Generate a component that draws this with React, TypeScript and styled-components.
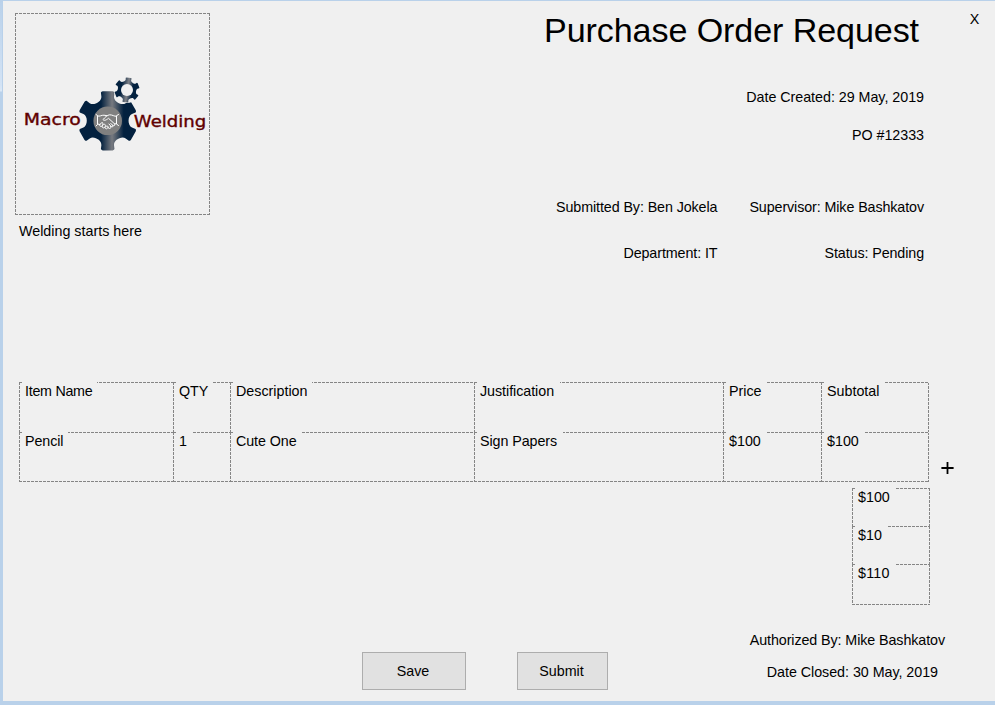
import React from "react";
import styled, { createGlobalStyle, css } from "styled-components";

const FACE = "#f0f0f0";
const DASH = "#858585";
const NAVY = "#03213f";

const GlobalStyle = createGlobalStyle`
  *, *::before, *::after { box-sizing: border-box; }
  html, body { margin: 0; padding: 0; overflow: hidden; }
  body {
    font-family: "Liberation Sans", Arial, sans-serif;
    font-size: 14.3px;
    line-height: 16px;
    color: #000;
    background: ${FACE};
  }
`;

const across = `repeating-linear-gradient(to right, ${DASH} 0 3px, ${FACE} 3px 4px)`;
const down = `repeating-linear-gradient(to bottom, ${DASH} 0 3px, ${FACE} 3px 4px)`;

const Frame = styled.div`
  width: 995px;
  height: 705px;
  padding: 1px 0 4px 3px;
  background:
    linear-gradient(to bottom, #b9d1ea 0, #d3e3f5 85px, #dbe8f6 91px, #b9d1ea 92px) 0 0 / 2px 100% no-repeat,
    #b9d1ea;
`;

const Sheet = styled.main`
  height: 700px;
  background: ${FACE};
  display: flex;
  flex-direction: column;
`;

const Header = styled.header`
  height: 381px;
  display: flex;
  padding: 0 14px 0 12px;
`;

const Brand = styled.div`
  padding-top: 12px;
  width: 195px;
`;

const LogoBox = styled.div`
  width: 195px;
  height: 202px;
  background:
    ${across} 0 0 / 100% 1px no-repeat,
    ${across} 0 100% / 100% 1px no-repeat,
    ${down} 0 0 / 1px 100% no-repeat,
    ${down} 100% 0 / 1px 100% no-repeat;
  svg { display: block; }
`;

const Tagline = styled.div`
  padding: 8px 0 0 4px;
  white-space: nowrap;
`;

const Details = styled.section`
  flex: 1;
  display: flex;
  flex-direction: column;
  align-items: flex-end;
  padding: 9px 0 0;
  white-space: nowrap;
`;

const Title = styled.h1`
  margin: 0 5px 38px 0;
  height: 41px;
  font-size: 34.1px;
  line-height: 41px;
  font-weight: 400;
  letter-spacing: -0.09px;
`;

const MetaLine = styled.div<{ $gap: number }>`
  height: 16px;
  margin-bottom: ${(p) => p.$gap}px;
  letter-spacing: -0.03px;
`;

const People = styled.div`
  display: grid;
  grid-template-columns: auto auto;
  gap: 30px 32px;
  text-align: right;
  letter-spacing: -0.1px;
`;

const CloseButton = styled.button`
  align-self: flex-start;
  margin: 10px 0 0 44px;
  width: 13px;
  padding: 0;
  border: 0;
  background: none;
  font: inherit;
  color: inherit;
`;

const ItemsArea = styled.section`
  display: flex;
  align-items: flex-end;
  padding-left: 16px;
  height: 100px;
`;

const Items = styled.div`
  width: 910px;
  height: 100px;
  display: grid;
  grid-template-columns: 154px 57px 244px 249px 98px 108px;
  grid-template-rows: 50px 50px;
`;

const Cell = styled.div<{ $right?: boolean; $bottom?: boolean }>`
  padding-left: 3px;
  background:
    ${down} 0 0 / 1px 100% no-repeat,
    ${across} 0 0 / 100% 1px no-repeat
    ${(p) => p.$right && css`, ${down} 100% 0 / 1px 100% no-repeat`}
    ${(p) => p.$bottom && css`, ${across} 0 100% / 100% 1px no-repeat`};
`;

const CellLabel = styled.div<{ $width: number; $tracking?: number }>`
  width: ${(p) => p.$width}px;
  height: 18px;
  padding: 1px 0 0 3px;
  background: ${FACE};
  white-space: nowrap;
  letter-spacing: ${(p) => p.$tracking ?? 0}px;
`;

const AddButton = styled.button`
  width: 14px;
  height: 14px;
  margin: 0 0 7px 12px;
  padding: 0;
  border: 0;
  background: none;
  svg { display: block; }
`;

const Totals = styled.section`
  width: 78px;
  margin: 6px 0 0 849px;
  display: grid;
  grid-template-rows: 38px 38px 41px;
`;

const Footer = styled.footer`
  display: flex;
  padding: 27px 0 0 359px;
`;

const FormButton = styled.button<{ $width: number }>`
  width: ${(p) => p.$width}px;
  height: 38px;
  margin: 20px 51px 0 0;
  padding: 0 2px 0 0;
  border: 1px solid #adadad;
  border-radius: 0;
  background: #e1e1e1;
  font: inherit;
  color: inherit;
`;

const Closing = styled.div`
  display: flex;
  flex-direction: column;
  align-items: flex-end;
  gap: 16px;
  margin-left: auto;
  padding-right: 50px;
  white-space: nowrap;
  letter-spacing: -0.09px;
`;

const ClosedDate = styled.div`
  padding-right: 7px;
  letter-spacing: -0.04px;
`;

const LogoText = styled.text`
  font-family: "DejaVu Sans", sans-serif;
  fill: #600000;
  stroke: #600000;
  stroke-width: 0.35;
`;

function gearPath(cx: number, cy: number, outer: number, inner: number, half: number, turn: number) {
  const at = (r: number, deg: number) => {
    const a = ((deg + turn) * Math.PI) / 180;
    return `${(cx + r * Math.sin(a)).toFixed(2)} ${(cy - r * Math.cos(a)).toFixed(2)}`;
  };
  let d = "";
  for (let i = 0; i < 6; i++) {
    const mid = i * 60;
    const shoulder = outer * 0.84;
    d += `${i ? "L" : "M"}${at(shoulder, mid - half - 1)} L${at(outer * 0.97, mid - half)} Q${at(outer, mid - half + 1)} ${at(outer, mid - half + 4)} `;
    d += `L${at(outer, mid + half - 4)} Q${at(outer, mid + half - 1)} ${at(outer * 0.97, mid + half)} L${at(shoulder, mid + half + 1)} `;
    d += `C${at(inner, mid + half + 3)} ${at(inner, mid + 57 - half)} ${at(shoulder, mid + 59 - half)} `;
  }
  return d + "Z";
}

function Logo() {
  return (
    <svg width="195" height="202" viewBox="15 13 195 202" role="img" aria-label="Macro Welding">
      <defs>
        <linearGradient id="steel" gradientUnits="userSpaceOnUse" x1="79" y1="0" x2="137" y2="0">
          <stop offset="0.38" stopColor={NAVY} />
          <stop offset="0.57" stopColor="#777a80" />
          <stop offset="0.77" stopColor={NAVY} />
        </linearGradient>
        <linearGradient id="steelSmall" gradientUnits="userSpaceOnUse" x1="115" y1="88" x2="139" y2="92">
          <stop offset="0.25" stopColor={NAVY} />
          <stop offset="0.52" stopColor="#808389" />
          <stop offset="0.72" stopColor={NAVY} />
        </linearGradient>
      </defs>
      <path d={gearPath(107.7, 120.8, 30, 20.3, 13.5, 0)} fill="url(#steel)" />
      <circle cx="127" cy="90" r="13" fill={FACE} />
      <path d={gearPath(127, 90, 12.6, 9, 14, 8)} fill="url(#steelSmall)" />
      <circle cx="127" cy="90" r="6" fill={FACE} />
      <circle cx="107.7" cy="120.8" r="14.3" fill="#808080" />
      <g fill="none" stroke="#fff" strokeWidth="1" strokeLinecap="round" strokeLinejoin="round">
        <path d="M96 114.5 L97.5 115.5 V124.5 L96 126 M97.5 116 C100 116.8 101.5 115 104 115.2 L107 115.7" />
        <path d="M118.5 114.5 L116.5 115.7 V124 L118.5 125.5 M116.5 116.3 C114 116.5 112.5 114.8 109.7 114.8 C107 115 105 117.5 103 119.6 C104.5 121.3 107 119.5 108.5 118.3 L114.5 123.8 C115.5 125.5 113.8 126.5 112.5 125.2 M116.3 123.8 H114.5" />
        <path d="M97.5 124 L100 124.5 C99 126 101 127.3 102.3 125.8 C101.5 127.8 104 128.8 105.2 126.8 C104.6 129 107 129.6 108 127.6 L109.3 128.4 C111 128.8 111.3 127.2 110.4 126.3 M100 124.5 L101.4 122.8 C103 121.8 103.4 123.5 102.3 125.8 M103.2 124.8 C104.5 123.3 106.2 124.5 105.2 126.8 M106 126.4 C107.3 125.2 108.7 126.3 108 127.6 M109 124 L111.2 126.5 C112.8 127.4 113.5 126.3 112.5 125.2 L110.8 123.4" />
      </g>
      <LogoText x="23.8" y="124.6" fontSize="15.6" textLength="57" lengthAdjust="spacingAndGlyphs">Macro</LogoText>
      <LogoText x="133.8" y="127" fontSize="15.4" textLength="72.5" lengthAdjust="spacingAndGlyphs">Welding</LogoText>
    </svg>
  );
}

type Entry = { text: string; width: number; tracking?: number };

const rows: Entry[][] = [
  [
    { text: "Item Name", width: 75, tracking: -0.28 },
    { text: "QTY", width: 37 },
    { text: "Description", width: 79 },
    { text: "Justification", width: 83, tracking: -0.05 },
    { text: "Price", width: 40 },
    { text: "Subtotal", width: 60 },
  ],
  [
    { text: "Pencil", width: 46, tracking: -0.1 },
    { text: "1", width: 16 },
    { text: "Cute One", width: 68, tracking: -0.08 },
    { text: "Sign Papers", width: 86, tracking: -0.08 },
    { text: "$100", width: 41 },
    { text: "$100", width: 40 },
  ],
];

const totals: Entry[] = [
  { text: "$100", width: 41 },
  { text: "$10", width: 33 },
  { text: "$110", width: 41, tracking: 0.2 },
];

export default function App() {
  return (
    <>
      <GlobalStyle />
      <Frame>
        <Sheet>
          <Header>
            <Brand>
              <LogoBox><Logo /></LogoBox>
              <Tagline>Welding starts here</Tagline>
            </Brand>
            <Details>
              <Title>Purchase Order Request</Title>
              <MetaLine $gap={22}>Date Created: 29 May, 2019</MetaLine>
              <MetaLine $gap={56}>PO #12333</MetaLine>
              <People>
                <span>Submitted By: Ben Jokela</span>
                <span>Supervisor: Mike Bashkatov</span>
                <span>Department: IT</span>
                <span>Status: Pending</span>
              </People>
            </Details>
            <CloseButton>X</CloseButton>
          </Header>
          <ItemsArea>
            <Items>
              {rows.map((row, r) =>
                row.map((cell, c) => (
                  <Cell key={`${r}-${c}`} $right={c === 5} $bottom={r === 1}>
                    <CellLabel $width={cell.width} $tracking={cell.tracking}>{cell.text}</CellLabel>
                  </Cell>
                )),
              )}
            </Items>
            <AddButton aria-label="Add item">
              <svg width="14" height="14" viewBox="0 0 14 14">
                <path d="M0.4 7H12.6M6.5 1V13" stroke="#000" strokeWidth="1.8" />
              </svg>
            </AddButton>
          </ItemsArea>
          <Totals>
            {totals.map((t, i) => (
              <Cell key={t.text} $right $bottom={i === 2}>
                <CellLabel $width={t.width} $tracking={t.tracking}>{t.text}</CellLabel>
              </Cell>
            ))}
          </Totals>
          <Footer>
            <FormButton $width={104}>Save</FormButton>
            <FormButton $width={91}>Submit</FormButton>
            <Closing>
              <div>Authorized By: Mike Bashkatov</div>
              <ClosedDate>Date Closed: 30 May, 2019</ClosedDate>
            </Closing>
          </Footer>
        </Sheet>
      </Frame>
    </>
  );
}
